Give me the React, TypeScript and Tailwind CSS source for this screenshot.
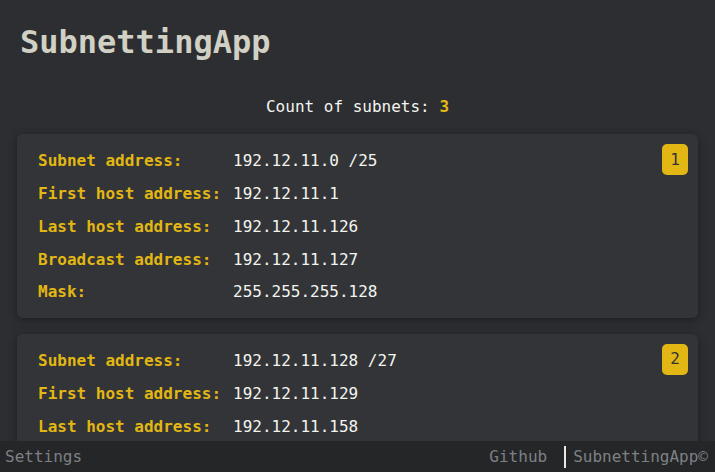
import React from 'react';

interface Subnet {
  address: string;
  prefix: number;
  firstHost: string;
  lastHost: string;
  broadcast: string;
  mask: string;
}

const subnets: Subnet[] = [
  {
    address: '192.12.11.0',
    prefix: 25,
    firstHost: '192.12.11.1',
    lastHost: '192.12.11.126',
    broadcast: '192.12.11.127',
    mask: '255.255.255.128',
  },
  {
    address: '192.12.11.128',
    prefix: 27,
    firstHost: '192.12.11.129',
    lastHost: '192.12.11.158',
    broadcast: '192.12.11.159',
    mask: '255.255.255.224',
  },
  {
    address: '192.12.11.160',
    prefix: 28,
    firstHost: '192.12.11.161',
    lastHost: '192.12.11.174',
    broadcast: '192.12.11.175',
    mask: '255.255.255.240',
  },
];

const Row: React.FC<{ label: string; value: string }> = ({ label, value }) => (
  <div className="flex h-[32.75px] items-center">
    <span className="w-[195px] shrink-0 font-bold text-[#e2b714]">{label}</span>
    <span className="text-[#f4f4f0]">{value}</span>
  </div>
);

const SubnetCard: React.FC<{ subnet: Subnet; index: number }> = ({ subnet, index }) => (
  <div className="relative rounded-md bg-[#323437] pl-[21px] pt-[11px] pb-[9px] shadow-[0_2px_10px_rgba(0,0,0,0.35)]">
    <div className="absolute right-[10px] top-[10px] flex h-[31px] w-[26px] items-center justify-center rounded-[5px] bg-[#e2b714] text-[#323437]">
      {index}
    </div>
    <Row label="Subnet address:" value={`${subnet.address} /${subnet.prefix}`} />
    <Row label="First host address:" value={subnet.firstHost} />
    <Row label="Last host address:" value={subnet.lastHost} />
    <Row label="Broadcast address:" value={subnet.broadcast} />
    <Row label="Mask:" value={subnet.mask} />
  </div>
);

const App: React.FC = () => {
  return (
    <div
      className="min-h-screen bg-[#2c2e31] pb-[40px] text-[16px]"
      style={{ fontFamily: '"DejaVu Sans Mono", "Liberation Mono", monospace' }}
    >
      <h1 className="px-5 pt-[22px] text-[32px] font-bold leading-[40px] text-[#d1d0c5]">
        SubnettingApp
      </h1>
      <p className="mt-[35px] text-center leading-[20px] text-[#f4f4f0]">
        Count of subnets: <span className="font-bold text-[#e2b714]">{subnets.length}</span>
      </p>
      <div className="mt-[17px] flex flex-col gap-4 px-[17px]">
        {subnets.map((s, i) => (
          <SubnetCard key={s.address} subnet={s} index={i + 1} />
        ))}
      </div>

      <footer className="fixed bottom-0 left-0 right-0 flex h-[31px] items-center justify-between bg-[#252628] pl-[5px] pr-[7px] text-[#7d8084]">
        <span>Settings</span>
        <div className="flex items-center">
          <span>Github</span>
          <span className="ml-[17px] mr-[7px] h-[22px] w-[2px] bg-[#e8e8e8]" />
          <span>SubnettingApp©</span>
        </div>
      </footer>
    </div>
  );
};

export default App;
